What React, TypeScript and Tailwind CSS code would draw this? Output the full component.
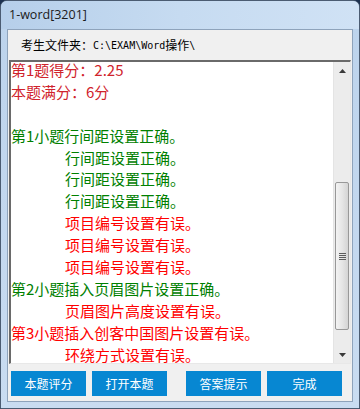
import React from "react"

const cjk = "font-['Noto_Sans_CJK_SC',sans-serif]"

type Line = { text: string; color: string; indent?: boolean }

const lines: Line[] = [
  { text: "第1题得分：2.25", color: "text-[#d0232c]" },
  { text: "本题满分：6分", color: "text-[#d0232c]" },
  { text: "", color: "" },
  { text: "第1小题行间距设置正确。", color: "text-[#008000]" },
  { text: "行间距设置正确。", color: "text-[#008000]", indent: true },
  { text: "行间距设置正确。", color: "text-[#008000]", indent: true },
  { text: "行间距设置正确。", color: "text-[#008000]", indent: true },
  { text: "项目编号设置有误。", color: "text-[#ff0000]", indent: true },
  { text: "项目编号设置有误。", color: "text-[#ff0000]", indent: true },
  { text: "项目编号设置有误。", color: "text-[#ff0000]", indent: true },
  { text: "第2小题插入页眉图片设置正确。", color: "text-[#008000]" },
  { text: "页眉图片高度设置有误。", color: "text-[#ff0000]", indent: true },
  { text: "第3小题插入创客中国图片设置有误。", color: "text-[#ff0000]" },
  { text: "环绕方式设置有误。", color: "text-[#ff0000]", indent: true },
]

function Arrow({ down }: { down?: boolean }) {
  return (
    <svg width="7" height="4" viewBox="0 0 7 4">
      <polygon points={down ? "0,0 7,0 3.5,4" : "0,4 3.5,0 7,4"} fill="#3a3a3a" />
    </svg>
  )
}

function ScrollBar() {
  return (
    <div className="w-[17px] flex flex-col bg-[#ececec] border-l border-[#e4e4e4]">
      <div className="h-[17px] flex items-center justify-center">
        <Arrow />
      </div>
      <div className="flex-1 flex flex-col pt-[103px]">
        <div className="h-[148px] mx-[1px] rounded-[2px] border border-[#989898] bg-gradient-to-r from-[#f3f3f3] via-[#e6e6e6] to-[#d4d4d4] flex flex-col items-center justify-center gap-[1px]">
          <div className="w-[7px] h-[1px] bg-[#5c5c5c]" />
          <div className="w-[7px] h-[1px] bg-[#5c5c5c]" />
          <div className="w-[7px] h-[1px] bg-[#5c5c5c]" />
          <div className="w-[7px] h-[1px] bg-[#5c5c5c]" />
        </div>
      </div>
      <div className="h-[17px] flex items-center justify-center">
        <Arrow down />
      </div>
    </div>
  )
}

const buttons = [
  { label: "本题评分", ml: "ml-[3px]" },
  { label: "打开本题", ml: "ml-[6px]" },
  { label: "答案提示", ml: "ml-[19px]" },
  { label: "完成", ml: "ml-[6px]" },
]

export default function App() {
  return (
    <div className="w-[360px] h-[409px] bg-[#1d3150] overflow-hidden">
      <div className="h-full rounded-t-[7px] border border-[#4b5c72] bg-gradient-to-b from-[#bcd3ec] to-[#c9dcf1] flex flex-col">
        {/* title bar */}
        <div className="h-[28px] flex items-center pl-[8px] bg-gradient-to-r from-[#b6cfea] via-[#c6dbf1] to-[#d0e2f5] rounded-t-[6px]">
          <span className="font-['Open_Sans',sans-serif] text-[12.5px] text-[#1a1a1a]">1-word[3201]</span>
        </div>

        {/* client area */}
        <div className="flex-1 mx-[6px] mb-[6px] border border-[#8ea3bb] bg-[#f0f0f0] flex flex-col">
          <div className={`h-[30px] flex items-center pl-[13px] text-[12px] text-black ${cjk}`}>
            <span>考生文件夹：</span>
            <span className="font-['DejaVu_Sans_Mono',monospace] text-[10px]">C:\EXAM\Word</span>
            <span>操作</span>
            <span className="font-['DejaVu_Sans_Mono',monospace] text-[10px]">\</span>
          </div>

          <div className="h-[304px] mx-[1px] flex border-t-2 border-l-2 border-r border-b border-t-[#6a6a6a] border-l-[#6a6a6a] border-r-[#e8e8e8] border-b-[#e8e8e8] bg-white">
            <div className="flex-1 overflow-hidden">
              <div className={`text-[15px] leading-[15px] whitespace-nowrap ${cjk}`}>
                {lines.map((l, i) => (
                  <div key={i} className={`h-[21.9px] ${l.color} ${l.indent ? "pl-[54px]" : ""}`}>
                    {l.text}
                  </div>
                ))}
              </div>
            </div>
            <ScrollBar />
          </div>

          <div className="mt-[7px] flex">
            {buttons.map((b) => (
              <div
                key={b.label}
                className={`${b.ml} w-[75px] h-[25px] bg-[#0787d2] text-white text-[12px] flex items-center justify-center ${cjk}`}
              >
                {b.label}
              </div>
            ))}
          </div>
        </div>
      </div>
    </div>
  )
}
